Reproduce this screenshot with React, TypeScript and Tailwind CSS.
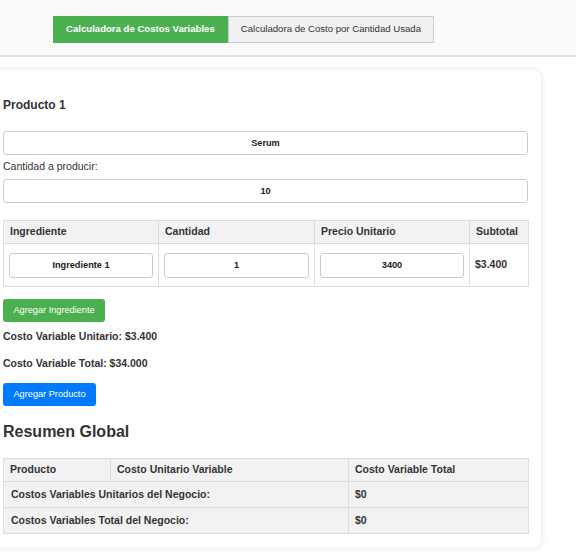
import { useState } from "react";

type Ingrediente = { nombre: string; cantidad: string; precio: string };

const fmt = (n: number) => "$" + n.toLocaleString("de-DE");

export default function App() {
    const [tab, setTab] = useState(0);
    const [producto, setProducto] = useState("Serum");
    const [cantidad, setCantidad] = useState("10");
    const [ingredientes, setIngredientes] = useState<Ingrediente[]>([
        { nombre: "Ingrediente 1", cantidad: "1", precio: "3400" },
    ]);

    const unitario = ingredientes.reduce((s, i) => s + Number(i.cantidad) * Number(i.precio), 0);
    const total = unitario * Number(cantidad);

    const update = (idx: number, key: keyof Ingrediente, value: string) => {
        setIngredientes(ingredientes.map((ing, i) => (i === idx ? { ...ing, [key]: value } : ing)));
    };

    const inputCls =
        "w-full h-[24px] border border-[#ccc] rounded-[3px] bg-white text-center text-[9.2px] font-bold text-[#222] outline-none";

    return (
        <div className="min-h-screen bg-white text-[#333] font-['Liberation_Sans',Arial,sans-serif] overflow-hidden">
            {/* Tabs */}
            <div className="h-[57px] bg-[#f9f9f9] border-b-2 border-[#e2e2e2] pt-[16px] pl-[53px] flex">
                <button
                    onClick={() => setTab(0)}
                    className={`h-[27px] px-[12px] text-[9.6px] border ${
                        tab === 0 ? "bg-[#4caf50] border-[#4caf50] text-white font-bold" : "bg-[#f1f1f1] border-[#ccc] text-[#333]"
                    }`}
                >
                    Calculadora de Costos Variables
                </button>
                <button
                    onClick={() => setTab(1)}
                    className={`h-[27px] px-[12px] text-[9.6px] border ${
                        tab === 1 ? "bg-[#4caf50] border-[#4caf50] text-white font-bold" : "bg-[#f1f1f1] border-[#ccc] text-[#333]"
                    }`}
                >
                    Calculadora de Costo por Cantidad Usada
                </button>
            </div>

            {/* Card */}
            <div className="mt-[13px] -ml-[17px] w-[558px] bg-white rounded-[8px] shadow-[0_0_6px_rgba(0,0,0,0.12)] pl-[20px] pr-[13px] pt-[28px] pb-[14px]">
                <h3 className="text-[12px] leading-[14px] font-bold">Producto 1</h3>
                <input className={`${inputCls} mt-[19px]`} value={producto} onChange={(e) => setProducto(e.target.value)} />
                <label className="block mt-[5px] text-[10.5px] leading-[12px]">Cantidad a producir:</label>
                <input className={`${inputCls} mt-[7px]`} value={cantidad} onChange={(e) => setCantidad(e.target.value)} />

                <table className="mt-[17px] w-[525px] border-collapse table-fixed text-[10.5px]">
                    <thead>
                        <tr className="bg-[#f2f2f2]">
                            <th className="w-[155px] h-[23px] border border-[#ddd] px-[6px] text-left font-bold">Ingrediente</th>
                            <th className="w-[156px] border border-[#ddd] px-[6px] text-left font-bold">Cantidad</th>
                            <th className="w-[155px] border border-[#ddd] px-[6px] text-left font-bold">Precio Unitario</th>
                            <th className="w-[59px] border border-[#ddd] px-[6px] text-left font-bold">Subtotal</th>
                        </tr>
                    </thead>
                    <tbody>
                        {ingredientes.map((ing, i) => (
                            <tr key={i}>
                                <td className="h-[43px] border border-[#ddd] px-[5px]">
                                    <input className={`${inputCls} h-[25px]`} value={ing.nombre} onChange={(e) => update(i, "nombre", e.target.value)} />
                                </td>
                                <td className="border border-[#ddd] px-[5px]">
                                    <input className={`${inputCls} h-[25px]`} value={ing.cantidad} onChange={(e) => update(i, "cantidad", e.target.value)} />
                                </td>
                                <td className="border border-[#ddd] px-[5px]">
                                    <input className={`${inputCls} h-[25px]`} value={ing.precio} onChange={(e) => update(i, "precio", e.target.value)} />
                                </td>
                                <td className="border border-[#ddd] px-[5px] font-bold">
                                    {fmt(Number(ing.cantidad) * Number(ing.precio))}
                                </td>
                            </tr>
                        ))}
                    </tbody>
                </table>

                <button
                    onClick={() => setIngredientes([...ingredientes, { nombre: "", cantidad: "0", precio: "0" }])}
                    className="block mt-[12px] h-[23px] w-[102px] bg-[#4caf50] text-white text-[9.2px] rounded-[3px]"
                >
                    Agregar Ingrediente
                </button>
                <p className="mt-[8px] text-[10.5px] leading-[12px] font-bold">Costo Variable Unitario: {fmt(unitario)}</p>
                <p className="mt-[15px] text-[10.5px] leading-[12px] font-bold">Costo Variable Total: {fmt(total)}</p>
                <button className="block mt-[14px] h-[23px] w-[93px] bg-[#007bff] text-white text-[9.2px] rounded-[3px]">
                    Agregar Producto
                </button>

                <h2 className="mt-[17px] text-[16px] leading-[18px] font-bold">Resumen Global</h2>

                <table className="mt-[17px] w-[525px] border-collapse table-fixed text-[10.5px] bg-[#f2f2f2]">
                    <thead>
                        <tr>
                            <th className="w-[107px] h-[23px] border border-[#ddd] px-[6px] text-left font-bold">Producto</th>
                            <th className="w-[238px] border border-[#ddd] px-[6px] text-left font-bold">Costo Unitario Variable</th>
                            <th className="w-[180px] border border-[#ddd] px-[6px] text-left font-bold">Costo Variable Total</th>
                        </tr>
                    </thead>
                    <tbody>
                        <tr>
                            <td colSpan={2} className="h-[26px] border border-[#ddd] px-[7px] font-bold">
                                Costos Variables Unitarios del Negocio:
                            </td>
                            <td className="border border-[#ddd] px-[6px] font-bold">$0</td>
                        </tr>
                        <tr>
                            <td colSpan={2} className="h-[26px] border border-[#ddd] px-[7px] font-bold">
                                Costos Variables Total del Negocio:
                            </td>
                            <td className="border border-[#ddd] px-[6px] font-bold">$0</td>
                        </tr>
                    </tbody>
                </table>
            </div>
        </div>
    );
}
